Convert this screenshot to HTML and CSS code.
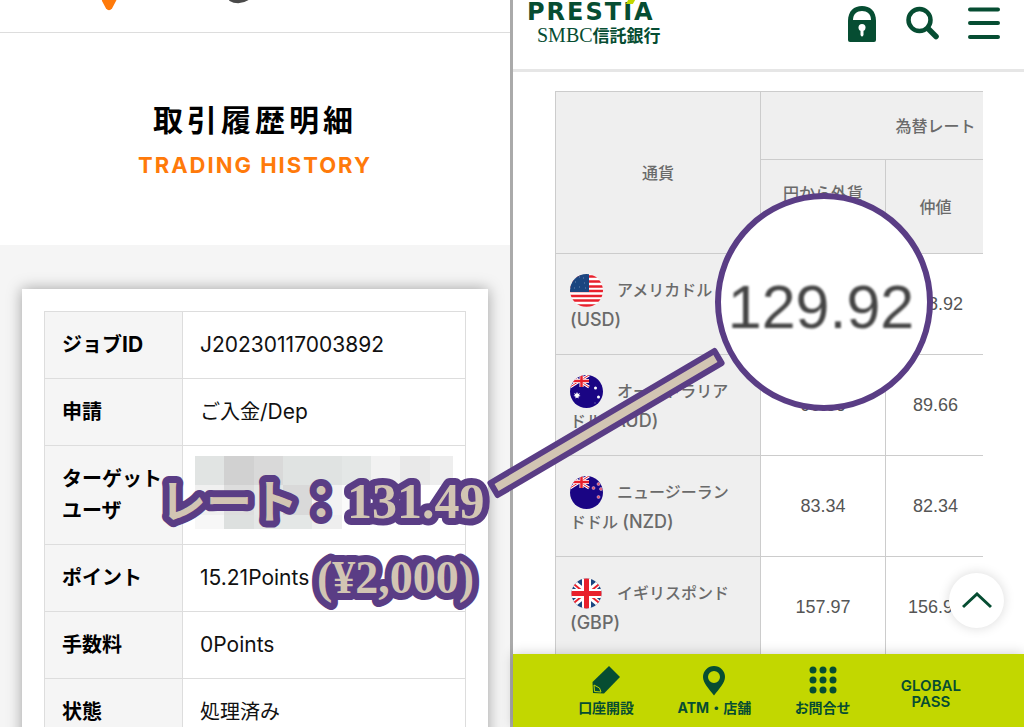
FILE: index.html
```html
<!DOCTYPE html>
<html lang="ja">
<head>
  <meta charset="UTF-8">
  <meta name="viewport" content="width=device-width, initial-scale=1.0">
  <title>取引履歴明細</title>
  <link rel="stylesheet" href="styles.css">
</head>
<body>

<div class="compare">

  <!-- Trading history -->
  <main class="history">
    <header class="history-header">
      <svg class="history-logo" width="150" height="12" viewBox="0 0 150 12" aria-hidden="true">
        <path d="M0 -6 H18 L15 1 L11 8.500 Q8 12 5 8.500 L1 1 Z" fill="#ff7a0a"/>
        <path d="M129 -1 Q138 4 147 -2" fill="none" stroke="#4a4a4a" stroke-width="4"/>
      </svg>
    </header>

    <div class="title">
      <h1>取引履歴明細</h1>
      <p>TRADING HISTORY</p>
    </div>

    <section class="history-body">
      <div class="card">
        <table class="detail">
          <tbody>
            <tr><th scope="row">ジョブ<span class="en">ID</span></th><td><span class="en">J20230117003892</span></td></tr>
            <tr><th scope="row">申請</th><td>ご入金<span class="en">/Dep</span></td></tr>
            <tr>
              <th scope="row">ターゲット<br>ユーザ</th>
              <td class="masked">
                <svg width="258" height="73" viewBox="0 0 258 73" aria-hidden="true">
                  <rect width="30" height="29" fill="#e1e4e3"/>
                  <rect x="29" width="30" height="29" fill="#d1d1d1"/>
                  <rect x="59" width="30" height="29" fill="#d9d9d9"/>
                  <rect x="88" width="59" height="29" fill="#e0e3e2"/>
                  <rect x="147" width="29" height="29" fill="#e4e7e6"/>
                  <rect x="176" width="29" height="29" fill="#f2f2f2"/>
                  <rect x="205" width="30" height="29" fill="#e9e9e9"/>
                  <rect x="235" width="23" height="29" fill="#eeeeee"/>
                  <rect y="29" width="29" height="30" fill="#f0f0f0"/>
                  <rect x="29" y="29" width="30" height="30" fill="#dddddd"/>
                  <rect x="59" y="29" width="29" height="30" fill="#e5e8e7"/>
                  <rect x="88" y="29" width="29" height="30" fill="#d9d9d9"/>
                  <rect x="117" y="29" width="30" height="30" fill="#f2f2f2"/>
                  <rect x="147" y="29" width="29" height="30" fill="#fafafa"/>
                  <rect y="59" width="29" height="14" fill="#f7f7f7"/>
                  <rect x="29" y="59" width="30" height="14" fill="#dde0df"/>
                  <rect x="59" y="59" width="58" height="14" fill="#e4e7e6"/>
                  <rect x="117" y="59" width="30" height="14" fill="#eeeeee"/>
                </svg>
              </td>
            </tr>
            <tr><th scope="row">ポイント</th><td><span class="en">15.21Points</span></td></tr>
            <tr><th scope="row">手数料</th><td><span class="en">0Points</span></td></tr>
            <tr><th scope="row">状態</th><td>処理済み</td></tr>
          </tbody>
        </table>
      </div>
    </section>
  </main>

  <!-- Bank exchange rates -->
  <section class="bank">
    <header class="bank-header">
      <a href="#" class="bank-logo">
        <span class="prestia">PREST<span class="accent">I</span>A</span>
        <span class="smbc">SMBC<b>信託銀行</b></span>
      </a>
      <div class="tools">
        <button type="button" aria-label="ログイン">
          <svg width="28" height="36" viewBox="0 0 28 36">
            <path d="M0 15 C0 5 6 0 14 0 S28 5 28 15 V34 Q28 36 26 36 H2 Q0 36 0 34 Z" fill="#064d32"/>
            <path d="M5 14 C5 8 9 5 14 5 S23 8 23 14 Z" fill="#fff"/>
            <circle cx="14" cy="21.500" r="3.500" fill="#fff"/>
            <path d="M12.500 22 V29 Q14 32 15.500 29 V22 Z" fill="#fff"/>
          </svg>
        </button>
        <button type="button" aria-label="検索">
          <svg width="34" height="34" viewBox="0 0 34 34" fill="none" stroke="#064d32" stroke-linecap="round">
            <circle cx="14.500" cy="14" r="11" stroke-width="4.500"/>
            <path d="M23 22.500 L31 30.500" stroke-width="5.500"/>
          </svg>
        </button>
        <button type="button" aria-label="メニュー">
          <svg width="32" height="34" viewBox="0 0 32 34" stroke="#064d32" stroke-width="4" stroke-linecap="round">
            <path d="M2 3.500 H30 M2 17 H30 M2 31 H30"/>
          </svg>
        </button>
      </div>
    </header>

    <div class="rates-wrap">
      <table class="rates">
        <colgroup>
          <col class="col-currency">
          <col class="col-buy">
          <col class="col-mid">
          <col class="col-sell">
        </colgroup>
        <thead>
          <tr class="head-top"><th rowspan="2">通貨</th><th colspan="3">為替レート</th></tr>
          <tr class="head-sub"><th class="buy">円から外貨</th><th>仲値</th><th></th></tr>
        </thead>
        <tbody>
          <tr>
            <th scope="row">
              <svg class="flag" width="33" height="33" viewBox="0 0 33 33" aria-hidden="true">
                <clipPath id="round"><circle cx="16.500" cy="16.500" r="16.500"/></clipPath>
                <g clip-path="url(#round)">
                  <rect width="33" height="33" fill="#fff"/>
                  <path d="M0 2.500 H33 M0 7.500 H33 M0 12.500 H33 M0 17 H33 M0 22 H33 M0 26.500 H33 M0 31.500 H33" stroke="#e8202c" stroke-width="2.500"/>
                  <rect width="19" height="18" fill="#1b4580"/>
                  <path d="M5 8h1M13 4h1M9 13h1M15 14h1M9 3h1M14 9h1M4 14h1" stroke="#6f88b0"/>
                </g>
              </svg>アメリカドル<br><span class="code">(USD)</span>
            </th>
            <td></td><td>128.92</td><td></td>
          </tr>
          <tr>
            <th scope="row">
              <svg class="flag" width="33" height="33" viewBox="0 0 33 33" aria-hidden="true">
                <g clip-path="url(#round)">
                  <rect width="33" height="33" fill="#1a0584"/>
                  <path d="M0 0 L19 12 M19 0 L0 12" stroke="#fff" stroke-width="3"/>
                  <path d="M0 0 L19 12 M19 0 L0 12" stroke="#e8202c"/>
                  <path d="M11.500 0 V12 M0 6 H19" stroke="#fff" stroke-width="4"/>
                  <path d="M11.500 0 V12 M0 6 H19" stroke="#e8202c" stroke-width="2.500"/>
                  <path d="M7 17l1 2 2-1-1 2 1.500 1-2 .500 0 2-1.500-1-1.500 1 0-2-2-.500 1.500-1-1-2 2 1z" fill="#fff"/>
                  <circle cx="25.500" cy="13" r="1.500" fill="#fff"/>
                  <circle cx="28.500" cy="22" r="1.500" fill="#fff"/>
                  <circle cx="25" cy="28" r="1" fill="#4a3b9c"/>
                </g>
              </svg>オーストラリア<br>ドル <span class="code">(AUD)</span>
            </th>
            <td>90.66</td><td>89.66</td><td></td>
          </tr>
          <tr>
            <th scope="row">
              <svg class="flag" width="33" height="33" viewBox="0 0 33 33" aria-hidden="true">
                <g clip-path="url(#round)">
                  <rect width="33" height="33" fill="#1a0584"/>
                  <path d="M0 0 L19 12 M19 0 L0 12" stroke="#fff" stroke-width="3"/>
                  <path d="M0 0 L19 12 M19 0 L0 12" stroke="#e8202c"/>
                  <path d="M11.500 0 V12 M0 6 H19" stroke="#fff" stroke-width="4"/>
                  <path d="M11.500 0 V12 M0 6 H19" stroke="#e8202c" stroke-width="2.500"/>
                  <g fill="#e8506a" stroke="#d9d4ee" stroke-width=".500">
                    <circle cx="23.500" cy="12" r="1.500"/>
                    <circle cx="28.500" cy="8" r="1.500"/>
                    <circle cx="31" cy="13" r="1.500"/>
                    <circle cx="28.500" cy="21" r="1.500"/>
                  </g>
                </g>
              </svg>ニュージーラン<br>ドドル <span class="code">(NZD)</span>
            </th>
            <td>83.34</td><td>82.34</td><td></td>
          </tr>
          <tr>
            <th scope="row">
              <svg class="flag" width="33" height="33" viewBox="0 0 33 33" aria-hidden="true">
                <clipPath id="round-uk"><circle cx="16.500" cy="16.500" r="15"/></clipPath>
                <g clip-path="url(#round-uk)">
                  <rect width="33" height="33" fill="#1b4580"/>
                  <path d="M0 3 L33 30 M33 3 L0 30" stroke="#fff" stroke-width="6"/>
                  <path d="M0 4 L16.500 17.500 M33 4 L16.500 17.500 M0 29 L16.500 15.500 M33 29 L16.500 15.500" stroke="#e8202c" stroke-width="2"/>
                  <path d="M16.500 0 V33 M0 16.500 H33" stroke="#fff" stroke-width="9"/>
                  <path d="M16.500 0 V33 M0 16.500 H33" stroke="#e8202c" stroke-width="5"/>
                </g>
              </svg>イギリスポンド<br><span class="code">(GBP)</span>
            </th>
            <td>157.97</td><td>156.97</td><td></td>
          </tr>
        </tbody>
      </table>
    </div>

    <button type="button" class="to-top" aria-label="ページの先頭へ">
      <svg width="30" height="18" viewBox="0 0 30 18" fill="none" stroke="#064d32" stroke-width="3">
        <path d="M1 15 L15 2 L29 15"/>
      </svg>
    </button>

    <nav class="bottom-nav">
      <a href="#">
        <svg width="28" height="28" viewBox="0 0 28 28">
          <path d="M17 0 L28 11 L12 27.500 L1 27 L.500 16 Z" fill="#064d32"/>
          <path d="M2 19 L2.500 25.500 L9 26 L7.500 22 Z" fill="none" stroke="#c2d700"/>
        </svg>
        口座開設
      </a>
      <a href="#">
        <svg width="24" height="30" viewBox="0 0 24 30">
          <path d="M12 0 A11 11 0 0 1 23 11 C23 17 17 23 12 29.500 C7 23 1 17 1 11 A11 11 0 0 1 12 0 Z M12 5 A6 6 0 1 0 12 17 A6 6 0 1 0 12 5 Z" fill="#064d32" fill-rule="evenodd"/>
        </svg>
        ATM・店舗
      </a>
      <a href="#">
        <svg width="28" height="28" viewBox="0 0 28 28" fill="#064d32">
          <circle cx="4" cy="4" r="3.500"/><circle cx="14" cy="4" r="3.500"/><circle cx="24" cy="4" r="3.500"/>
          <circle cx="4" cy="14" r="3.500"/><circle cx="14" cy="14" r="3.500"/><circle cx="24" cy="14" r="3.500"/>
          <circle cx="4" cy="24" r="3.500"/><circle cx="14" cy="24" r="3.500"/><circle cx="24" cy="24" r="3.500"/>
        </svg>
        お問合せ
      </a>
      <a href="#" class="global">GLOBAL<br>PASS</a>
    </nav>
  </section>

  <!-- Callouts drawn over both screens -->
  <div class="lens"><span>129.92</span></div>
  <svg class="pointer" width="250" height="160" viewBox="0 0 250 160" aria-hidden="true">
    <rect x="0" y="-7" width="260" height="14" transform="translate(9 149) rotate(-30.500)" fill="#d2c5b3" stroke="#5a3d85" stroke-width="6" stroke-linejoin="round"/>
  </svg>
  <svg class="callouts" width="350" height="160" viewBox="0 0 350 160">
    <text x="8" y="68" class="kana">レート：</text>
    <text x="195" y="68" class="rate">131.49</text>
    <text x="165" y="143" class="yen">(¥2,000)</text>
  </svg>

</div>

</body>
</html>
```

FILE: styles.css
```css
* { box-sizing: border-box; }
body { margin: 0; font-family: Inter, "Noto Sans CJK JP", sans-serif; color: #111; background: #fff; }
h1, p { margin: 0; }
a { color: inherit; text-decoration: none; }
button { border: 0; padding: 0; background: none; cursor: pointer; }
svg { display: block; }
table { border-collapse: collapse; }

.compare { position: relative; display: flex; height: 100vh; overflow: hidden; }

/* trading history */
.history { flex: none; width: calc(50% + 1px); display: flex; flex-direction: column; min-width: 0; border-right: 3px solid #aaa; }
.history-header { height: 33px; padding-left: 101px; border-bottom: 1px solid #ddd; flex: none; }
.title { padding: 64px 0 62px; text-align: center; }
.title h1 { font-size: 30px; line-height: 46px; letter-spacing: 4px; color: #000; }
.title p { padding-top: 4px; font-size: 22px; line-height: 36px; font-weight: 700; letter-spacing: 2px; color: #ff7a0a; }
.history-body { flex: 1; padding: 44px 22px 0; background: #f5f5f5; }
.card { padding: 22px 22px 40px; background: #fff; box-shadow: 0 0 14px rgba(0, 0, 0, .35); }
.detail { width: 100%; font-size: 20px; line-height: 32px; }
.detail th, .detail td { padding: 17px; border: 1px solid #ddd; text-align: left; font-weight: 400; }
.detail th { width: 138px; background: #f5f5f5; font-weight: 700; white-space: nowrap; color: #000; }
.detail .masked { padding: 10px 12px; vertical-align: top; }
.en { font-size: 21px; }

/* bank */
.bank { flex: 1; display: flex; flex-direction: column; position: relative; min-width: 0; }
.bank-header { display: flex; justify-content: space-between; flex: none; height: 72px; padding: 0 24px 0 14px; border-bottom: 3px solid #e6e6e6; color: #064d32; }
.bank-logo { display: block; }
.prestia { display: block; font: 700 24px/24px "DejaVu Sans", sans-serif; letter-spacing: 2px; }
.accent { position: relative; }
.accent::before { content: ""; position: absolute; left: 4px; top: 2px; width: 7px; height: 4px; background: #c2d700; transform: skewX(-30deg); }
.smbc { display: block; padding-left: 10px; font: 20px/22px "Liberation Serif", serif; white-space: nowrap; }
.smbc b { font: 700 17px/22px "Noto Sans CJK JP", sans-serif; }
.tools { display: flex; align-items: flex-start; gap: 29px; padding-top: 6px; }

.rates-wrap { flex: 1; margin: 19px 41px 0 42px; overflow: hidden; min-height: 0; }
.rates { table-layout: fixed; width: 555px; font-size: 16px; line-height: 30px; }
.col-currency { width: 205px; }
.col-buy, .col-sell { width: 125px; }
.col-mid { width: 100px; }
.rates th, .rates td { border: 1px solid #ccc; padding: 0; text-align: center; }
.rates th { background: #efefef; color: #6a6a6a; font-weight: 500; }
.rates td { font: 18px "Liberation Sans", sans-serif; color: #555; }
.head-top { height: 68px; }
.head-sub { height: 94px; }
.head-sub .buy { padding-top: 18px; vertical-align: top; }
.rates tbody tr { height: 101px; }
.rates tbody th { padding-left: 14px; text-align: left; white-space: nowrap; }
.flag { display: inline-block; margin: 0 14px -2px 0; vertical-align: -9px; }
.code { font-size: 18px; }

.to-top { position: absolute; right: 20px; bottom: 99px; width: 55px; height: 55px; display: flex; align-items: center; justify-content: center; border-radius: 50%; background: #fff; box-shadow: 0 0 12px rgba(0, 0, 0, .15); }

.bottom-nav { position: relative; display: grid; grid-template-columns: repeat(4, 1fr); flex: none; height: 73px; padding: 12px 39px 9px; background: #c2d700; box-shadow: 0 0 12px rgba(0, 0, 0, .2); color: #064d32; font-size: 14px; line-height: 20px; font-weight: 700; }
.bottom-nav a { display: flex; flex-direction: column; align-items: center; justify-content: space-between; }
.bottom-nav .global { display: block; padding-top: 12px; font-size: 15px; line-height: 16px; font-weight: 600; text-align: center; }

/* callouts */
.lens { position: absolute; left: 715px; top: 193px; width: 218px; height: 218px; padding: 10px 6px 0 0; display: flex; align-items: center; justify-content: center; border: 6px solid #5a3d85; border-radius: 50%; background: #fff; }
.lens span { font: 61px/60px "Liberation Sans", sans-serif; color: #444; filter: blur(1px); }
.pointer { position: absolute; left: 485px; top: 340px; }
.callouts { position: absolute; left: 152px; top: 450px; fill: #d2c5b3; stroke: #5a3d85; stroke-width: 14px; stroke-linejoin: round; paint-order: stroke; }
.kana { font: 700 46px "Noto Sans CJK JP", sans-serif; }
.rate { font: 700 50px "Liberation Serif", serif; }
.yen { font: 700 46px "Liberation Serif", serif; }
```
